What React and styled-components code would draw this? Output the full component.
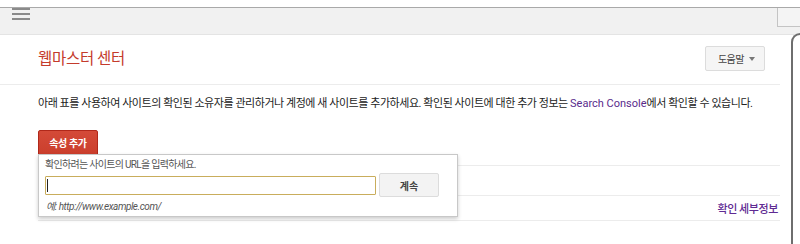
import React from 'react';
import styled, { createGlobalStyle } from 'styled-components';

const GlobalStyle = createGlobalStyle`
    html, body {
        margin: 0;
        padding: 0;
        background: #ffffff;
        overflow: hidden;
    }
    body {
        font-family: Roboto, 'Noto Sans CJK KR', Arial, sans-serif;
        color: #222222;
    }
`;

const Page = styled.div`
    width: 800px;
    height: 244px;
    padding-top: 7px;
    box-sizing: border-box;
    display: flex;
    flex-direction: column;
`;

const TopBar = styled.div`
    height: 26px;
    flex: none;
    background: #f1f1f1;
    border-top: 1px solid #a9a9a9;
    border-bottom: 1px solid #e4e4e4;
    display: flex;
    align-items: flex-start;
    justify-content: space-between;
    padding-left: 12px;
`;

const Burger = styled.div`
    display: flex;
    flex-direction: column;
    gap: 3px;
    span {
        display: block;
        width: 18px;
        height: 2px;
        background: #8a8a8a;
    }
`;

const CornerBox = styled.div`
    width: 22px;
    height: 18px;
    border-left: 1px solid #c4c4c4;
    border-bottom: 1px solid #c4c4c4;
    background: #f4f4f4;
`;

const Body = styled.div`
    flex: 1;
    display: flex;
    min-height: 0;
`;

const Main = styled.div`
    width: 780px;
    flex: none;
    display: flex;
    flex-direction: column;
`;

const SideFrame = styled.div`
    margin-left: 11px;
    margin-top: -2px;
    flex: 1;
    border-left: 2px solid #6e6e6e;
    border-top: 2px solid #6e6e6e;
    border-top-left-radius: 12px;
`;

const TitleRow = styled.div`
    display: flex;
    align-items: center;
    justify-content: space-between;
    padding: 11px 15px 13px 38px;
    border-bottom: 1px solid #ececec;
`;

const Title = styled.h1`
    margin: 0;
    font-family: 'Noto Sans CJK KR', sans-serif;
    font-size: 15.5px;
    line-height: 20px;
    font-weight: 400;
    color: #c43b2c;
    letter-spacing: -0.3px;
    margin-top: -3px;
`;

const HelpButton = styled.div`
    box-sizing: border-box;
    width: 60px;
    height: 25px;
    display: flex;
    align-items: center;
    justify-content: space-between;
    padding: 0 9px 0 12px;
    background: #f5f5f5;
    border: 1px solid #dcdcdc;
    border-radius: 2px;
    font-family: 'Noto Sans CJK KR', sans-serif;
    font-size: 10px;
    letter-spacing: -0.6px;
    color: #444;
`;

const Caret = styled.span`
    width: 0;
    height: 0;
    border-left: 3px solid transparent;
    border-right: 3px solid transparent;
    border-top: 4px solid #777;
`;

const Content = styled.div`
    padding-left: 38px;
    display: flex;
    flex-direction: column;
`;

const Description = styled.p`
    margin: 11px 0 0;
    font-size: 11px;
    line-height: 16px;
    letter-spacing: -0.45px;
    color: #222;
    white-space: nowrap;
    a {
        color: #5a2b8c;
        text-decoration: none;
        letter-spacing: 0;
    }
`;

const AddArea = styled.div`
    position: relative;
    margin-top: 18px;
`;

const RedButton = styled.div`
    box-sizing: border-box;
    width: 60px;
    height: 25px;
    display: flex;
    align-items: center;
    justify-content: center;
    background: linear-gradient(#d44a38, #cb3f2d);
    border: 1px solid #b0281a;
    border-radius: 2px 2px 0 0;
    color: #fff;
    font-family: 'Noto Sans CJK KR', sans-serif;
    font-size: 10px;
    font-weight: 700;
    letter-spacing: -0.3px;
`;

const Table = styled.div`
    display: flex;
    flex-direction: column;
`;

const Row = styled.div`
    height: ${p => p.h}px;
    box-sizing: border-box;
    border-bottom: 1px solid #ececec;
    display: flex;
    align-items: center;
    justify-content: flex-end;
    padding-right: 2px;
`;

const DetailLink = styled.a`
    font-family: 'Noto Sans CJK KR', sans-serif;
    font-size: 11px;
    font-weight: 500;
    letter-spacing: -0.4px;
    color: #5f2a93;
    text-decoration: none;
    margin-bottom: 1px;
`;

const Popup = styled.div`
    position: absolute;
    left: 0;
    top: 24px;
    width: 420px;
    height: 63px;
    box-sizing: border-box;
    background: #fff;
    border: 1px solid #c8c8c8;
    box-shadow: 0 2px 4px rgba(0, 0, 0, 0.2);
    padding: 3px 6px 0 6px;
    display: flex;
    flex-direction: column;
`;

const PopupLabel = styled.div`
    font-size: 10px;
    line-height: 13px;
    letter-spacing: -0.7px;
    color: #555;
`;

const InputRow = styled.div`
    display: flex;
    align-items: center;
    gap: 3px;
    margin-top: 2px;
`;

const UrlInput = styled.div`
    box-sizing: border-box;
    width: 331px;
    height: 19px;
    border: 1px solid #c9ad5c;
    border-radius: 1px;
    padding: 2px 1px;
    span {
        display: block;
        width: 1px;
        height: 13px;
        background: #222;
    }
`;

const GrayButton = styled.div`
    box-sizing: border-box;
    width: 60px;
    height: 24px;
    display: flex;
    align-items: center;
    justify-content: center;
    background: #f3f3f3;
    border: 1px solid #dcdcdc;
    border-radius: 2px;
    font-family: 'Noto Sans CJK KR', sans-serif;
    font-size: 10px;
    font-weight: 700;
    color: #444;
`;

const Example = styled.div`
    margin-top: 1px;
    font-size: 10px;
    font-style: italic;
    letter-spacing: -0.45px;
    color: #555;
    padding-left: 1px;
`;

export default function App() {
    return (
        <>
            <GlobalStyle />
            <Page>
                <TopBar>
                    <Burger>
                        <span />
                        <span />
                        <span />
                    </Burger>
                    <CornerBox />
                </TopBar>
                <Body>
                    <Main>
                        <TitleRow>
                            <Title>웹마스터 센터</Title>
                            <HelpButton>
                                도움말
                                <Caret />
                            </HelpButton>
                        </TitleRow>
                        <Content>
                            <Description>
                                아래 표를 사용하여 사이트의 확인된 소유자를 관리하거나 계정에 새 사이트를 추가하세요. 확인된 사이트에 대한 추가 정보는 <a href="#">Search Console</a>에서 확인할 수 있습니다.
                            </Description>
                            <AddArea>
                                <RedButton>속성 추가</RedButton>
                                <Table>
                                    <Row h={11} />
                                    <Row h={30} />
                                    <Row h={25}>
                                        <DetailLink href="#">확인 세부정보</DetailLink>
                                    </Row>
                                </Table>
                                <Popup>
                                    <PopupLabel>확인하려는 사이트의 URL을 입력하세요.</PopupLabel>
                                    <InputRow>
                                        <UrlInput><span /></UrlInput>
                                        <GrayButton>계속</GrayButton>
                                    </InputRow>
                                    <Example>예: http://www.example.com/</Example>
                                </Popup>
                            </AddArea>
                        </Content>
                    </Main>
                    <SideFrame />
                </Body>
            </Page>
        </>
    );
}
